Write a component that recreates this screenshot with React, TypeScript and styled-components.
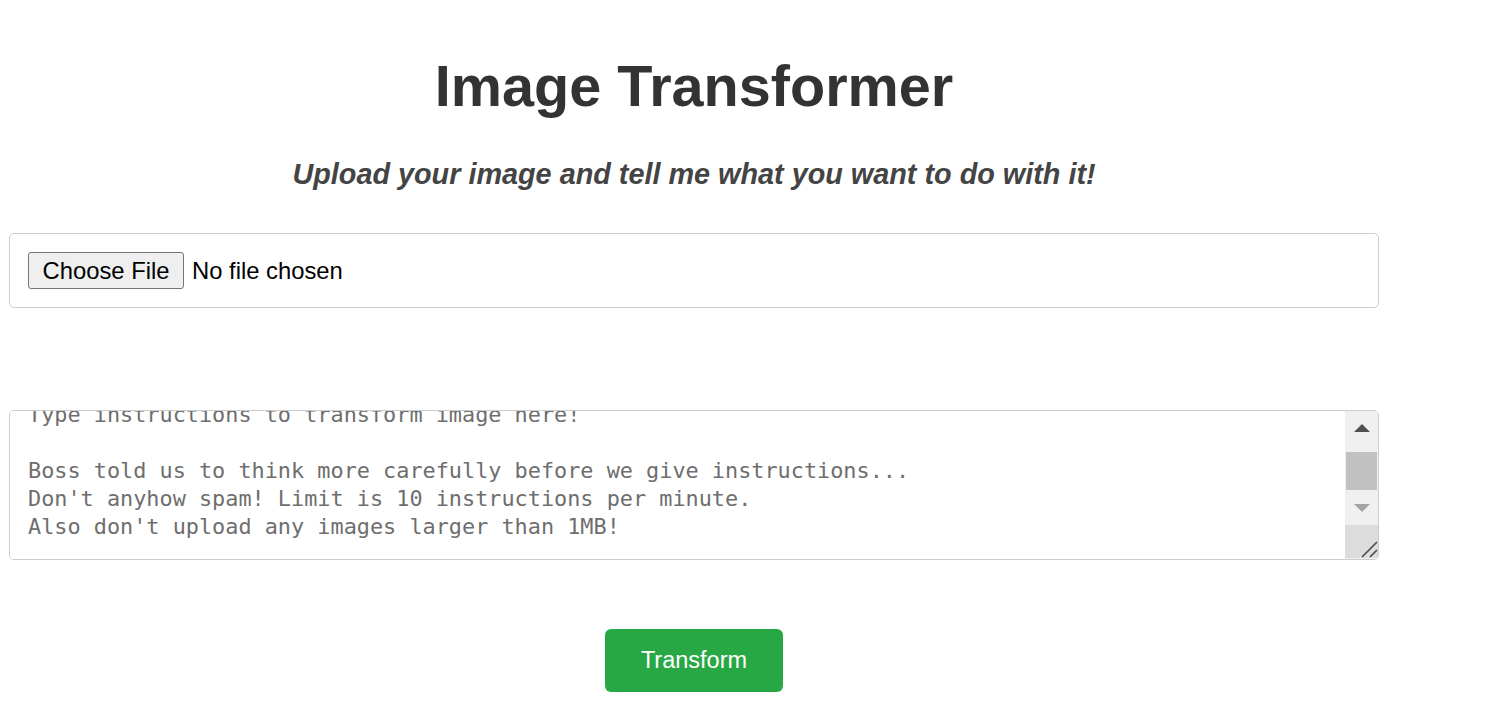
import { useEffect, useRef } from "react";
import styled, { createGlobalStyle } from "styled-components";

const GlobalStyle = createGlobalStyle`
  body {
    margin: 0;
    background: #fff;
    font-family: "Liberation Sans", Arial, sans-serif;
  }
`;

const INSTRUCTIONS = `Type instructions to transform image here!

Boss told us to think more carefully before we give instructions...
Don't anyhow spam! Limit is 10 instructions per minute.
Also don't upload any images larger than 1MB!`;

export default function App() {
  const areaRef = useRef<HTMLTextAreaElement>(null);

  useEffect(() => {
    if (areaRef.current) areaRef.current.scrollTop = areaRef.current.scrollHeight;
  }, []);

  return (
    <>
      <GlobalStyle />
      <Container>
        <Title>Image Transformer</Title>
        <Subtitle>Upload your image and tell me what you want to do with it!</Subtitle>
        <UploadCard>
          <FileInput type="file" accept="image/*" />
        </UploadCard>
        <AreaWrap>
          <Instructions ref={areaRef} defaultValue={INSTRUCTIONS} spellCheck={false} />
          {/* painted scrollbar, the headless browser hides the native one */}
          <ScrollRail>
            <ArrowButton>
              <Arrow $dir="up" />
            </ArrowButton>
            <Track>
              <Thumb />
            </Track>
            <ArrowButton>
              <Arrow $dir="down" />
            </ArrowButton>
            <Grip>
              <svg width="18" height="18" viewBox="0 0 18 18">
                <path d="M2 17 L17 2 M10 17 L17 10" stroke="#4a4a4a" strokeWidth="1.6" fill="none" />
              </svg>
            </Grip>
          </ScrollRail>
        </AreaWrap>
        <ButtonRow>
          <TransformButton>Transform</TransformButton>
        </ButtonRow>
      </Container>
    </>
  );
}

const Container = styled.div`
  width: 1370px;
  margin-left: 9px;
  display: flex;
  flex-direction: column;
`;

const Title = styled.h1`
  margin: 53px 0 0;
  text-align: center;
  font-size: 57.6px;
  line-height: 66px;
  font-weight: 700;
  color: #333;
`;

const Subtitle = styled.p`
  margin: 39px 0 0;
  text-align: center;
  font-size: 28.8px;
  line-height: 33px;
  font-weight: 700;
  font-style: italic;
  color: #444;
`;

const UploadCard = styled.div`
  margin-top: 42px;
  border: 1px solid #ccc;
  border-radius: 5px;
  padding: 18px;
  display: flex;
  align-items: center;
`;

const FileInput = styled.input`
  font-family: "Liberation Sans", Arial, sans-serif;
  font-size: 23.8px;
  color: #000;

  &::file-selector-button {
    font-family: inherit;
    font-size: 23.8px;
    color: #000;
    background: #efefef;
    border: 1px solid #767676;
    border-radius: 3px;
    padding: 3.5px 13.5px;
    margin-right: 8px;
  }
`;

const AreaWrap = styled.div`
  margin-top: 102px;
  position: relative;
  height: 150px;
`;

const Instructions = styled.textarea`
  display: block;
  box-sizing: border-box;
  width: 100%;
  height: 100%;
  padding: 18px 51px 18px 18px;
  border: 1px solid #ccc;
  border-radius: 5px;
  font-family: "DejaVu Sans Mono", "Liberation Mono", monospace;
  font-size: 21.85px;
  line-height: 28px;
  color: #6e6e6e;
  resize: none;
  outline: none;
  overflow-y: auto;
`;

const ScrollRail = styled.div`
  position: absolute;
  top: 1px;
  right: 1px;
  bottom: 1px;
  width: 33px;
  display: flex;
  flex-direction: column;
  background: #f0f0f0;
  border-radius: 0 4px 4px 0;
  overflow: hidden;
`;

const ArrowButton = styled.div`
  height: 34px;
  display: flex;
  align-items: center;
  justify-content: center;
`;

const Arrow = styled.span<{ $dir: "up" | "down" }>`
  width: 0;
  height: 0;
  border-left: 8px solid transparent;
  border-right: 8px solid transparent;
  ${({ $dir }) =>
    $dir === "up" ? "border-bottom: 8px solid #505050;" : "border-top: 8px solid #a3a3a3;"}
`;

const Track = styled.div`
  height: 46px;
  padding: 7px 1px 0 1px;
  box-sizing: border-box;
`;

const Thumb = styled.div`
  height: 38px;
  background: #c1c1c1;
`;

const Grip = styled.div`
  height: 33px;
  background: #dcdcdc;
  display: flex;
  align-items: flex-end;
  justify-content: flex-end;
`;

const ButtonRow = styled.div`
  margin-top: 69px;
  display: flex;
  justify-content: center;
`;

const TransformButton = styled.button`
  font-family: "Liberation Sans", Arial, sans-serif;
  font-size: 23.5px;
  line-height: 27px;
  color: #fff;
  background: #28a745;
  border: none;
  border-radius: 6px;
  padding: 18px 36px;
  cursor: pointer;
`;
